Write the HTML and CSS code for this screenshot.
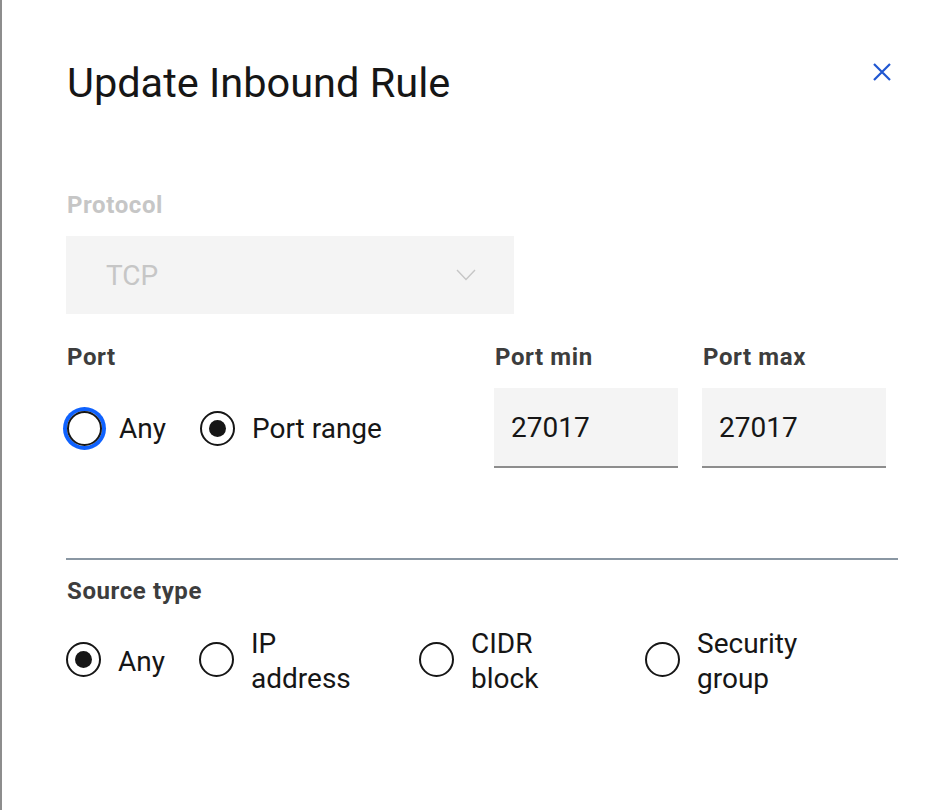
FILE: index.html
```html
<!DOCTYPE html>
<html lang="en">
<head>
<meta charset="utf-8">
<title>Update Inbound Rule</title>
<link rel="stylesheet" href="styles.css">
</head>
<body>
<div class="modal">
  <header class="modal-header">
    <h2 class="modal-title">Update Inbound Rule</h2>
    <button class="close-btn" type="button" aria-label="Close">
      <svg width="18" height="18" viewBox="0 0 18 18" aria-hidden="true"><path d="M1 1 L17 17 M17 1 L1 17" fill="none" stroke="currentColor" stroke-width="2.2"/></svg>
    </button>
  </header>

  <div class="field protocol-field">
    <span class="label label-disabled">Protocol</span>
    <div class="select select-disabled">
      <span class="select-value">TCP</span>
      <svg class="chevron" width="20" height="12" viewBox="0 0 20 12" aria-hidden="true"><path d="M1 1 L10 10.5 L19 1" fill="none" stroke="currentColor" stroke-width="1.4"/></svg>
    </div>
  </div>

  <div class="port-row">
    <div class="field">
      <span class="label">Port</span>
      <div class="radio-row">
        <label class="radio"><span class="radio-circle radio-focus"></span><span class="radio-text">Any</span></label>
        <label class="radio"><span class="radio-circle radio-checked"></span><span class="radio-text">Port range</span></label>
      </div>
    </div>
    <div class="field">
      <span class="label">Port min</span>
      <input class="text-input" type="text" value="27017">
    </div>
    <div class="field">
      <span class="label">Port max</span>
      <input class="text-input" type="text" value="27017">
    </div>
  </div>

  <hr class="divider">

  <div class="field">
    <span class="label">Source type</span>
    <div class="source-grid">
      <label class="radio"><span class="radio-circle radio-checked"></span><span class="radio-text wrap">Any</span></label>
      <label class="radio"><span class="radio-circle"></span><span class="radio-text wrap">IP address</span></label>
      <label class="radio"><span class="radio-circle"></span><span class="radio-text wrap">CIDR block</span></label>
      <label class="radio"><span class="radio-circle"></span><span class="radio-text wrap">Security group</span></label>
    </div>
  </div>
</div>
</body>
</html>
```

FILE: styles.css
```css
* { box-sizing: border-box; }

html, body {
  margin: 0;
  background: #ffffff;
}

body {
  min-height: 100vh;
  border-left: 2px solid #8d8d8d;
  font-family: Roboto, "Noto Sans", "Liberation Sans", sans-serif;
  color: #161616;
}

.modal {
  padding: 59px 48px 0 64px;
}

.modal-header {
  display: flex;
  justify-content: space-between;
  align-items: flex-start;
}

.modal-title {
  margin: 0;
  font-size: 41.5px;
  line-height: 48px;
  font-weight: 400;
  color: #161616;
  padding-left: 1px;
}

.close-btn {
  width: 32px;
  height: 32px;
  margin-top: -3px;
  padding: 0;
  border: 0;
  background: transparent;
  color: #1f56d1;
  display: flex;
  align-items: center;
  justify-content: center;
}

.field {
  display: flex;
  flex-direction: column;
}

.protocol-field {
  margin-top: 84px;
}

.label {
  font-size: 24px;
  line-height: 28px;
  font-weight: 700;
  letter-spacing: 0.6px;
  color: #3d3d3d;
  margin-bottom: 17px;
  padding-left: 1px;
}

.label-disabled {
  color: #c6c6c6;
}

.select {
  width: 448px;
  height: 78px;
  background: #f4f4f4;
  display: flex;
  align-items: center;
  justify-content: space-between;
  padding: 0 38px 0 40px;
  font-size: 28px;
}

.select-disabled {
  color: #c6c6c6;
}

.chevron {
  color: #c6c6c6;
}

.port-row {
  margin-top: 29px;
  display: grid;
  grid-template-columns: 404px 184px 184px;
  column-gap: 24px;
}

.radio-row {
  height: 80px;
  display: flex;
  align-items: center;
  gap: 34px;
  padding-left: 1px;
}

.radio {
  display: flex;
  align-items: center;
  gap: 17px;
  font-size: 28px;
  line-height: 35px;
  color: #161616;
}

.radio-circle {
  flex: none;
  width: 35px;
  height: 35px;
  border-radius: 50%;
  border: 2px solid #161616;
  display: flex;
  align-items: center;
  justify-content: center;
}

.radio-focus {
  box-shadow: 0 0 0 4px #0f62fe;
}

.radio-checked::after {
  content: "";
  width: 17px;
  height: 17px;
  border-radius: 50%;
  background: #161616;
}

.text-input {
  width: 184px;
  height: 80px;
  margin: 0;
  border: 0;
  border-bottom: 2px solid #8d8d8d;
  background: #f4f4f4;
  padding: 0 0 0 17px;
  font-family: inherit;
  font-size: 28px;
  color: #161616;
  outline: none;
  border-radius: 0;
}

.divider {
  margin: 90px 0 0 0;
  border: 0;
  height: 2px;
  background: #8a97a3;
}

.divider + .field {
  margin-top: 17px;
}

.source-grid {
  display: grid;
  grid-template-columns: 133px 220px 226px 1fr;
  align-items: center;
  min-height: 70px;
}

.source-grid .radio-text {
  padding-top: 4px;
}

.wrap {
  max-width: 120px;
}
```
